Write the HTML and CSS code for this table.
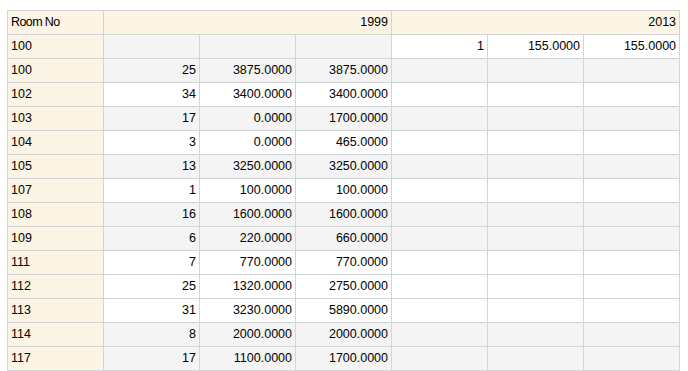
FILE: index.html
```html
<!DOCTYPE html>
<html>
<head>
<meta charset="utf-8">
<link rel="stylesheet" href="styles.css">
</head>
<body>
<table class="grid">
  <colgroup>
    <col class="c"><col class="c"><col class="c"><col class="c"><col class="c"><col class="c"><col class="c">
  </colgroup>
  <thead>
    <tr class="head">
      <th class="room"><span class="lbl">Room No</span></th>
      <th class="yr" colspan="3">1999</th>
      <th class="yr" colspan="3">2013</th>
    </tr>
  </thead>
  <tbody>
    <tr><td class="room">100</td><td class="g"></td><td class="g"></td><td class="g"></td><td>1</td><td>155.0000</td><td>155.0000</td></tr>
    <tr class="g"><td class="room">100</td><td>25</td><td>3875.0000</td><td>3875.0000</td><td></td><td></td><td></td></tr>
    <tr><td class="room">102</td><td>34</td><td>3400.0000</td><td>3400.0000</td><td></td><td></td><td></td></tr>
    <tr class="g"><td class="room">103</td><td>17</td><td>0.0000</td><td>1700.0000</td><td></td><td></td><td></td></tr>
    <tr><td class="room">104</td><td>3</td><td>0.0000</td><td>465.0000</td><td></td><td></td><td></td></tr>
    <tr class="g"><td class="room">105</td><td>13</td><td>3250.0000</td><td>3250.0000</td><td></td><td></td><td></td></tr>
    <tr><td class="room">107</td><td>1</td><td>100.0000</td><td>100.0000</td><td></td><td></td><td></td></tr>
    <tr class="g"><td class="room">108</td><td>16</td><td>1600.0000</td><td>1600.0000</td><td></td><td></td><td></td></tr>
    <tr class="g"><td class="room">109</td><td>6</td><td>220.0000</td><td>660.0000</td><td></td><td></td><td></td></tr>
    <tr><td class="room">111</td><td>7</td><td>770.0000</td><td>770.0000</td><td></td><td></td><td></td></tr>
    <tr><td class="room">112</td><td>25</td><td>1320.0000</td><td>2750.0000</td><td></td><td></td><td></td></tr>
    <tr><td class="room">113</td><td>31</td><td>3230.0000</td><td>5890.0000</td><td></td><td></td><td></td></tr>
    <tr class="g"><td class="room">114</td><td>8</td><td>2000.0000</td><td>2000.0000</td><td></td><td></td><td></td></tr>
    <tr class="g"><td class="room">117</td><td>17</td><td>1100.0000</td><td>1700.0000</td><td></td><td></td><td></td></tr>
  </tbody>
</table>
</body>
</html>
```

FILE: styles.css
```css
html, body {
  margin: 0;
  padding: 0;
  background: #ffffff;
}
body {
  padding: 10px 0 0 7px;
  font-family: "Liberation Sans", Arial, sans-serif;
  font-size: 12.5px;
  color: #000;
}
.grid {
  border-collapse: collapse;
  table-layout: fixed;
  width: 673px;
}
.grid .c {
  width: 96px;
}
.grid tr {
  height: 24px;
}
.grid th,
.grid td {
  border: 1px solid #d4d4d4;
  padding: 0 3px 2px 3px;
  text-align: right;
  vertical-align: middle;
  font-weight: normal;
  white-space: nowrap;
  overflow: hidden;
  box-sizing: border-box;
  height: 24px;
}
.grid .head th {
  background: #fcf4e4;
}
.grid td {
  background: #ffffff;
}
.grid tr.g td,
.grid td.g {
  background: #f4f4f4;
}
.grid .room,
.grid tr.g td.room {
  text-align: left;
  background: #fcf4e4;
}
.lbl {
  letter-spacing: -0.6px;
}
```
